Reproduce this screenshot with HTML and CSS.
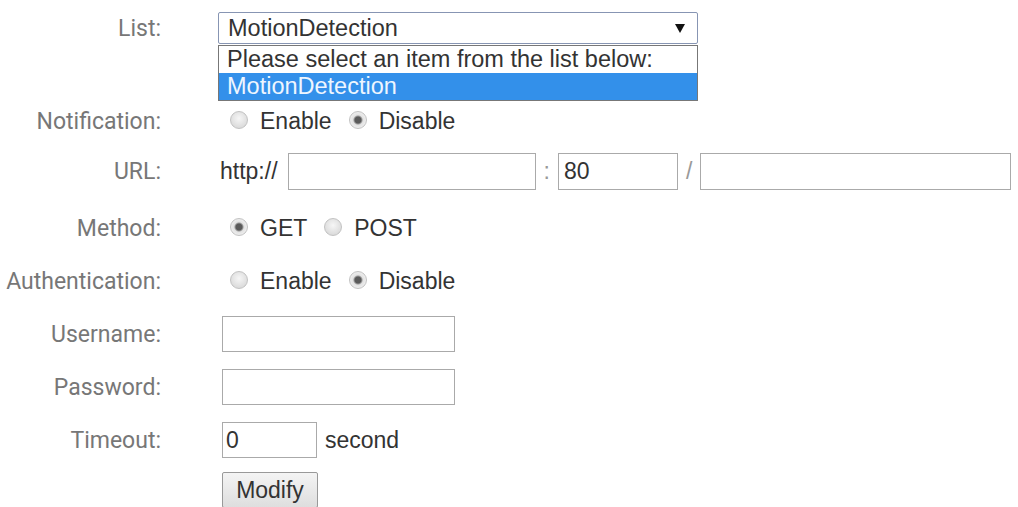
FILE: index.html
```html
<!DOCTYPE html>
<html lang="en">

<head>
    <meta charset="UTF-8">
    <title>Event Notification</title>
    <link rel="stylesheet" href="styles.css">
</head>

<body>
    <form class="settings">
        <!-- Event list, shown with its dropdown open -->
        <div class="row row-list">
            <label class="label">List:</label>
            <div class="value">
                <div class="select">
                    <span>MotionDetection</span>
                    <svg class="arrow" width="10" height="9" viewBox="0 0 10 9"><path d="M0 0H10L5 9Z" fill="#111"/></svg>
                    <ul class="options">
                        <li>Please select an item from the list below:</li>
                        <li class="selected">MotionDetection</li>
                    </ul>
                </div>
            </div>
        </div>

        <div class="row">
            <label class="label">Notification:</label>
            <div class="value">
                <input type="radio" class="radio" name="notify"> <span class="option-text">Enable</span>
                <input type="radio" class="radio" name="notify" checked> <span class="option-text">Disable</span>
            </div>
        </div>

        <div class="row row-url">
            <label class="label">URL:</label>
            <div class="value">
                <span class="prefix">http://</span>
                <input type="text" class="text-input host">
                <span class="sep">:</span>
                <input type="text" class="text-input port" value="80">
                <span class="sep">/</span>
                <input type="text" class="text-input path">
            </div>
        </div>

        <div class="row">
            <label class="label">Method:</label>
            <div class="value">
                <input type="radio" class="radio" name="method" checked> <span class="option-text">GET</span>
                <input type="radio" class="radio" name="method"> <span class="option-text">POST</span>
            </div>
        </div>

        <div class="row">
            <label class="label">Authentication:</label>
            <div class="value">
                <input type="radio" class="radio" name="auth"> <span class="option-text">Enable</span>
                <input type="radio" class="radio" name="auth" checked> <span class="option-text">Disable</span>
            </div>
        </div>

        <div class="row">
            <label class="label">Username:</label>
            <div class="value">
                <input type="text" class="text-input account">
            </div>
        </div>

        <div class="row">
            <label class="label">Password:</label>
            <div class="value">
                <input type="password" class="text-input account">
            </div>
        </div>

        <div class="row">
            <label class="label">Timeout:</label>
            <div class="value">
                <input type="text" class="text-input timeout" value="0">
                <span class="unit">second</span>
            </div>
        </div>

        <div class="row row-button">
            <span class="label"></span>
            <div class="value">
                <button type="button" class="button">Modify</button>
            </div>
        </div>
    </form>
</body>

</html>
```

FILE: styles.css
```css
/* Page and form layout */
body {
    margin: 0;
    background-color: #fff;
    font-family: 'Liberation Sans', Arial, sans-serif;
    color: #333;
}

.settings {
    display: flex;
    flex-direction: column;
    gap: 17px;
    padding-top: 12px;
}

.row {
    display: grid;
    grid-template-columns: 161px 1fr;
    column-gap: 57px;
    align-items: center;
    height: 36px;
}

.row-list {
    height: 32px;
    margin-bottom: 42px;
}

.row-url {
    height: 37px;
    margin-top: -3px;
    margin-bottom: 3px;
}

.row-button {
    margin-top: -3px;
}

.label {
    text-align: right;
    font-family: 'Roboto', 'Liberation Sans', sans-serif;
    font-size: 23px;
    color: #777;
    white-space: nowrap;
}

.value {
    display: flex;
    align-items: center;
    font-size: 23px;
    height: 100%;
}

/* Fake select with its open list */
.select {
    position: relative;
    box-sizing: border-box;
    width: 480px;
    height: 32px;
    border: 1px solid #8795b3;
    border-radius: 2px;
    padding: 0 9px;
    display: flex;
    align-items: center;
    justify-content: space-between;
    font-size: 23.5px;
    color: #333;
}

.options {
    position: absolute;
    top: 32px;
    left: -1px;
    width: 480px;
    box-sizing: border-box;
    margin: 0;
    padding: 0;
    list-style: none;
    border: 1px solid #777;
    background-color: #fff;
}

.options li {
    height: 27px;
    line-height: 27px;
    padding-left: 8px;
    color: #333;
}

.options .selected {
    background-color: #3390ea;
    color: #eef6ff;
}

.arrow {
    margin-right: 3px;
}

/* Radio buttons */
.radio {
    appearance: none;
    width: 18px;
    height: 18px;
    margin: 0 12px 2px 12px;
    border: 1px solid #c2c2c2;
    border-radius: 50%;
    background: radial-gradient(circle at 50% 40%, #f6f6f6, #d2d2d2);
}

.radio:checked {
    background: radial-gradient(circle, #5a5a5a 0 3px, #9a9a9a 4px, #e2e2e2 5px, #f2f2f2 9px);
}

.option-text {
    margin-right: 5px;
}

/* Text fields */
.text-input {
    box-sizing: border-box;
    height: 37px;
    border: 1px solid #aaa;
    padding: 0 5px;
    font-family: 'Liberation Sans', Arial, sans-serif;
    font-size: 23px;
    color: #333;
    background-color: #fff;
}

.prefix {
    margin-left: 2px;
    margin-right: 10px;
    color: #333;
}

.sep {
    color: #999;
    margin: 0 8px;
}

.host {
    width: 248px;
}

.port {
    width: 120px;
}

.path {
    width: 311px;
}

.account {
    width: 233px;
    height: 36px;
    margin-left: 4px;
}

.timeout {
    width: 95px;
    height: 36px;
    margin-left: 4px;
    padding: 0 3px;
}

.unit {
    margin-left: 8px;
}

.button {
    margin-left: 4px;
    width: 96px;
    height: 36px;
    border: 1px solid #999;
    border-radius: 2px;
    background: linear-gradient(#f4f4f4, #dedede);
    font-family: 'Liberation Sans', Arial, sans-serif;
    font-size: 23px;
    color: #333;
}
```
